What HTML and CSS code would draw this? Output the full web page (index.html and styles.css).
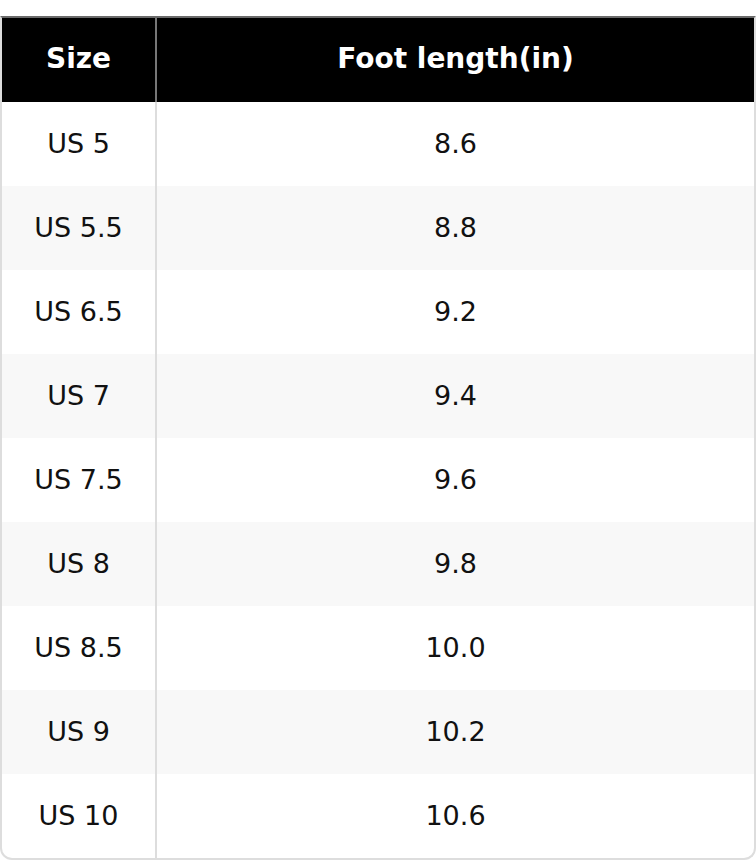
FILE: index.html
```html
<!DOCTYPE html>
<html lang="en">
<head>
<meta charset="utf-8">
<title>Size chart</title>
<link rel="stylesheet" href="styles.css">
</head>
<body>
<table class="size-table">
  <thead>
    <tr><th class="col-size">Size</th><th class="col-len">Foot length(in)</th></tr>
  </thead>
  <tbody>
    <tr><td class="col-size">US 5</td><td class="col-len">8.6</td></tr>
    <tr><td class="col-size">US 5.5</td><td class="col-len">8.8</td></tr>
    <tr><td class="col-size">US 6.5</td><td class="col-len">9.2</td></tr>
    <tr><td class="col-size">US 7</td><td class="col-len">9.4</td></tr>
    <tr><td class="col-size">US 7.5</td><td class="col-len">9.6</td></tr>
    <tr><td class="col-size">US 8</td><td class="col-len">9.8</td></tr>
    <tr><td class="col-size">US 8.5</td><td class="col-len">10.0</td></tr>
    <tr><td class="col-size">US 9</td><td class="col-len">10.2</td></tr>
    <tr><td class="col-size">US 10</td><td class="col-len">10.6</td></tr>
  </tbody>
</table>
</body>
</html>
```
FILE: styles.css
```css
html, body {
  margin: 0;
  padding: 0;
  background: #ffffff;
}
body {
  padding-top: 16px;
  font-family: "DejaVu Sans", "Liberation Sans", sans-serif;
}
.size-table {
  width: 756px;
  border-collapse: separate;
  border-spacing: 0;
  border: 2px solid #dddddd;
  border-top-color: #6a6a6a;
  border-radius: 0 0 12px 12px;
  overflow: hidden;
  font-size: 27px;
  color: #111111;
}
.size-table th,
.size-table td {
  height: 84px;
  padding: 0 0 2px;
  text-align: center;
  vertical-align: middle;
  box-sizing: border-box;
}
.size-table th {
  background: #000000;
  color: #ffffff;
  font-weight: bold;
  font-size: 28px;
  padding-bottom: 3px;
}
.size-table .col-size {
  width: 155px;
  border-right: 2px solid #dddddd;
}
.size-table th.col-size {
  border-right-color: #777777;
}
.size-table tbody tr:nth-child(even) td {
  background: #f8f8f8;
}
```
